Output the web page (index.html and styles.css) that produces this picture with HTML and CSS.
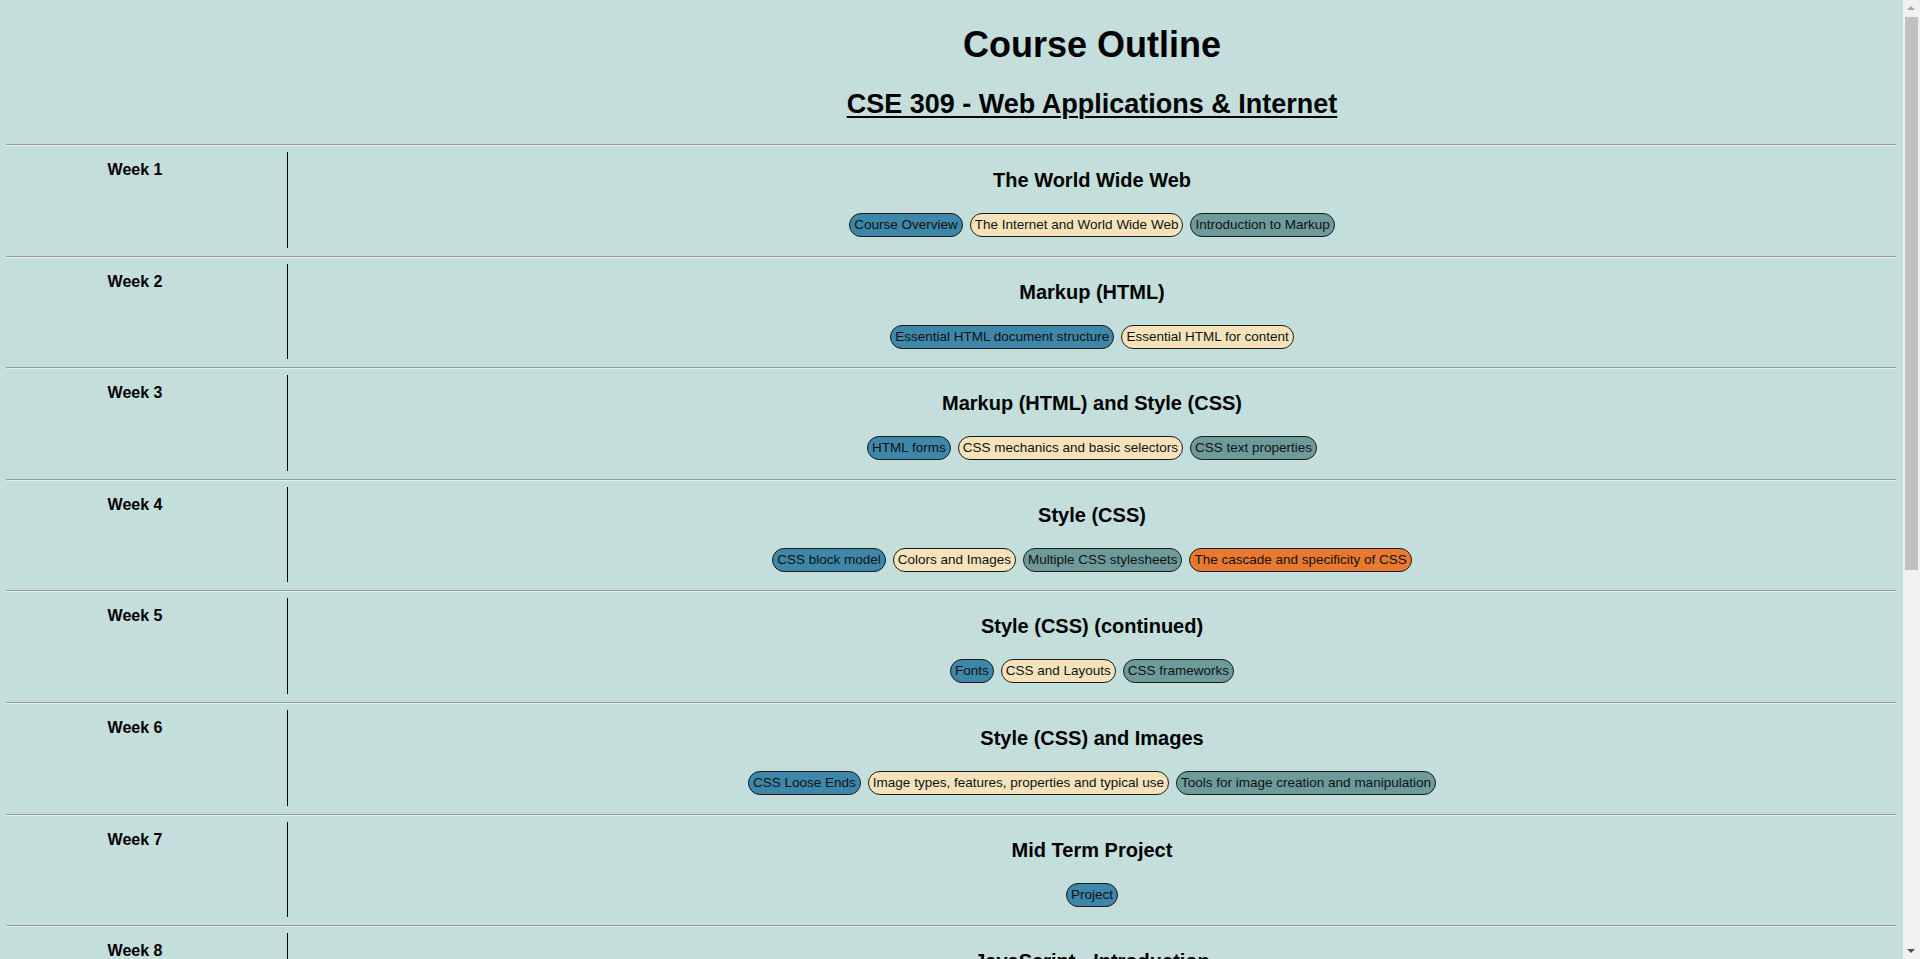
FILE: index.html
```html
<!DOCTYPE html>
<html lang="en">
<head>
<meta charset="utf-8">
<title>Course Outline - CSE 309</title>
<link rel="stylesheet" href="styles.css">
</head>
<body>
<header class="page-head">
  <div class="spacer"></div>
  <div class="head-text">
    <h1 class="title">Course Outline</h1>
    <h2 class="subtitle">CSE 309 - Web Applications &amp; Internet</h2>
  </div>
</header>

<main class="weeks">
  <section class="week">
    <hr class="rule">
    <div class="row">
      <div class="week-label">Week 1</div>
      <div class="week-body">
        <h3 class="topic">The World Wide Web</h3>
        <div class="tags">
          <span class="tag blue">Course Overview</span>
          <span class="tag cream">The Internet and World Wide Web</span>
          <span class="tag slate">Introduction to Markup</span>
        </div>
      </div>
    </div>
  </section>

  <section class="week">
    <hr class="rule">
    <div class="row">
      <div class="week-label">Week 2</div>
      <div class="week-body">
        <h3 class="topic">Markup (HTML)</h3>
        <div class="tags">
          <span class="tag blue">Essential HTML document structure</span>
          <span class="tag cream">Essential HTML for content</span>
        </div>
      </div>
    </div>
  </section>

  <section class="week">
    <hr class="rule">
    <div class="row">
      <div class="week-label">Week 3</div>
      <div class="week-body">
        <h3 class="topic">Markup (HTML) and Style (CSS)</h3>
        <div class="tags">
          <span class="tag blue">HTML forms</span>
          <span class="tag cream">CSS mechanics and basic selectors</span>
          <span class="tag slate">CSS text properties</span>
        </div>
      </div>
    </div>
  </section>

  <section class="week">
    <hr class="rule">
    <div class="row">
      <div class="week-label">Week 4</div>
      <div class="week-body">
        <h3 class="topic">Style (CSS)</h3>
        <div class="tags">
          <span class="tag blue">CSS block model</span>
          <span class="tag cream">Colors and Images</span>
          <span class="tag slate">Multiple CSS stylesheets</span>
          <span class="tag orange">The cascade and specificity of CSS</span>
        </div>
      </div>
    </div>
  </section>

  <section class="week">
    <hr class="rule">
    <div class="row">
      <div class="week-label">Week 5</div>
      <div class="week-body">
        <h3 class="topic">Style (CSS) (continued)</h3>
        <div class="tags">
          <span class="tag blue">Fonts</span>
          <span class="tag cream">CSS and Layouts</span>
          <span class="tag slate">CSS frameworks</span>
        </div>
      </div>
    </div>
  </section>

  <section class="week">
    <hr class="rule">
    <div class="row">
      <div class="week-label">Week 6</div>
      <div class="week-body">
        <h3 class="topic">Style (CSS) and Images</h3>
        <div class="tags">
          <span class="tag blue">CSS Loose Ends</span>
          <span class="tag cream">Image types, features, properties and typical use</span>
          <span class="tag slate">Tools for image creation and manipulation</span>
        </div>
      </div>
    </div>
  </section>

  <section class="week">
    <hr class="rule">
    <div class="row">
      <div class="week-label">Week 7</div>
      <div class="week-body">
        <h3 class="topic">Mid Term Project</h3>
        <div class="tags">
          <span class="tag blue">Project</span>
        </div>
      </div>
    </div>
  </section>

  <section class="week">
    <hr class="rule">
    <div class="row">
      <div class="week-label">Week 8</div>
      <div class="week-body">
        <h3 class="topic">JavaScript - Introduction</h3>
        <div class="tags">
          <span class="tag blue">JavaScript basics</span>
          <span class="tag cream">Variables and data types</span>
          <span class="tag slate">Control structures</span>
        </div>
      </div>
    </div>
  </section>

  <section class="week">
    <hr class="rule">
    <div class="row">
      <div class="week-label">Week 9</div>
      <div class="week-body">
        <h3 class="topic">JavaScript - DOM</h3>
        <div class="tags">
          <span class="tag blue">The Document Object Model</span>
          <span class="tag cream">Events and event handlers</span>
        </div>
      </div>
    </div>
  </section>

  <section class="week">
    <hr class="rule">
    <div class="row">
      <div class="week-label">Week 10</div>
      <div class="week-body">
        <h3 class="topic">JavaScript - Libraries</h3>
        <div class="tags">
          <span class="tag blue">jQuery</span>
          <span class="tag cream">Form validation</span>
          <span class="tag slate">AJAX and JSON</span>
        </div>
      </div>
    </div>
  </section>

  <section class="week">
    <hr class="rule">
    <div class="row">
      <div class="week-label">Week 11</div>
      <div class="week-body">
        <h3 class="topic">Server Side Scripting</h3>
        <div class="tags">
          <span class="tag blue">Introduction to PHP</span>
          <span class="tag cream">Handling forms</span>
        </div>
      </div>
    </div>
  </section>

  <section class="week">
    <hr class="rule">
    <div class="row">
      <div class="week-label">Week 12</div>
      <div class="week-body">
        <h3 class="topic">Databases</h3>
        <div class="tags">
          <span class="tag blue">MySQL basics</span>
          <span class="tag cream">PHP and MySQL</span>
        </div>
      </div>
    </div>
  </section>

  <section class="week">
    <hr class="rule">
    <div class="row">
      <div class="week-label">Week 13</div>
      <div class="week-body">
        <h3 class="topic">Final Project</h3>
        <div class="tags">
          <span class="tag blue">Project</span>
        </div>
      </div>
    </div>
  </section>
</main>

<div class="scrollbar" aria-hidden="true">
  <div class="sb-arrow sb-up"></div>
  <div class="sb-track">
    <div class="sb-thumb"></div>
  </div>
  <div class="sb-arrow sb-down"></div>
</div>
</body>
</html>
```

FILE: styles.css
```css
html {
  background: #c3dedb;
}

body {
  margin: 0 24px 0 6px;
  font-family: "Liberation Sans", Arial, sans-serif;
  color: #000;
  background: #c3dedb;
}

.page-head {
  display: flex;
}

.spacer {
  width: 282px;
  flex: none;
}

.head-text {
  flex: 1;
  text-align: center;
}

.title {
  margin: 24px 0 22px;
  font-size: 36px;
  line-height: 42px;
  font-weight: bold;
}

.subtitle {
  margin: 0 0 24px;
  font-size: 27px;
  line-height: 32px;
  font-weight: bold;
  text-decoration: underline;
  text-decoration-thickness: 2px;
  text-underline-offset: 3px;
}

.weeks {
  padding-bottom: 40px;
}

.rule {
  margin: 0;
  height: 0;
  border: none;
  border-top: 1px solid #9a9a9a;
  border-bottom: 1px solid #e6eeed;
}

.row {
  display: flex;
  margin: 6px 0 8px;
  min-height: 95.6px;
}

.week-label {
  width: 258px;
  flex: none;
  padding: 9px 23px 0 0;
  text-align: center;
  font-size: 16px;
  line-height: 18px;
  font-weight: bold;
}

.week-body {
  flex: 1;
  border-left: 1px solid #000;
  text-align: center;
}

.topic {
  margin: 17px 0 0;
  font-size: 20px;
  line-height: 23px;
  font-weight: bold;
}

.tags {
  display: flex;
  justify-content: center;
  gap: 7px;
  margin-top: 21px;
}

.tag {
  display: inline-block;
  padding: 3px 4px;
  font-size: 13.5px;
  line-height: 16px;
  color: #111;
  border: 1px solid #1a1a1a;
  border-radius: 12px;
}

.blue {
  background: #3e87a9;
}

.cream {
  background: #f6e3bb;
}

.slate {
  background: #6e9a9b;
}

.orange {
  background: #e8792f;
}

/* simulated browser scrollbar */
.scrollbar {
  position: fixed;
  top: 0;
  right: 0;
  width: 17px;
  height: 100vh;
  display: flex;
  flex-direction: column;
  background: #f1f1f1;
}

.sb-arrow {
  height: 17px;
  flex: none;
  position: relative;
}

.sb-up::after,
.sb-down::after {
  content: "";
  position: absolute;
  left: 4px;
  border-left: 4px solid transparent;
  border-right: 4px solid transparent;
}

.sb-up::after {
  top: 6px;
  border-bottom: 4px solid #a3a3a3;
}

.sb-down::after {
  top: 7px;
  border-top: 4px solid #505050;
}

.sb-track {
  flex: 1;
  padding: 0 2px;
}

.sb-thumb {
  height: 553px;
  background: #c1c1c1;
}
```
